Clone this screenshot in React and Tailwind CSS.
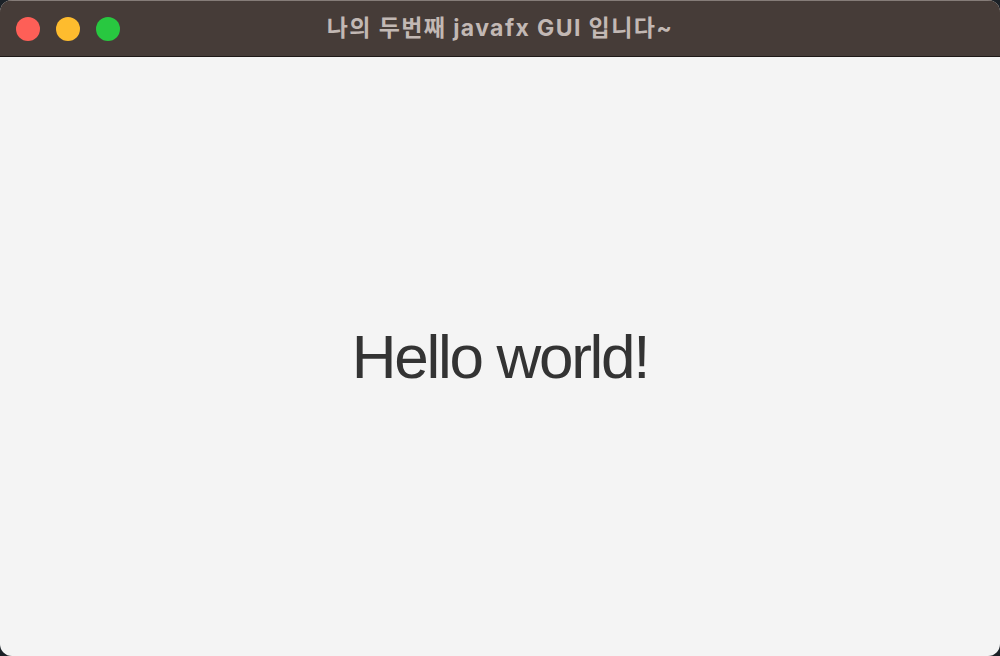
export default function App() {
  return (
    <div className="w-[1000px] h-[656px] bg-[#1b2127]">
      <div className="w-full h-full flex flex-col rounded-[12px] overflow-hidden bg-[#f4f4f4]">
        {/* Title bar */}
        <div className="relative h-[57px] shrink-0 bg-[#463c38] border-t border-[#857c78] border-b border-b-[#1f1a18] flex items-center">
          <div className="flex items-center gap-[16px] pl-[16px]">
            <span className="w-[24px] h-[24px] rounded-full bg-[#fe5f57]" />
            <span className="w-[24px] h-[24px] rounded-full bg-[#febc2e]" />
            <span className="w-[24px] h-[24px] rounded-full bg-[#28c840]" />
          </div>
          <div
            className="absolute inset-0 flex items-center justify-center text-[23px] font-bold tracking-[1.4px] text-[#c2b8b4]"
            style={{ fontFamily: '"Inter", "Noto Sans CJK KR", sans-serif' }}
          >
            나의 두번째 javafx GUI 입니다~
          </div>
        </div>

        {/* Content */}
        <div className="flex-1 flex items-center justify-center">
          <span
            className="text-[62px] text-[#333333] leading-none tracking-[-2.3px]"
            style={{ fontFamily: '"Liberation Sans", Arial, sans-serif' }}
          >
            Hello world!
          </span>
        </div>
      </div>
    </div>
  );
}
